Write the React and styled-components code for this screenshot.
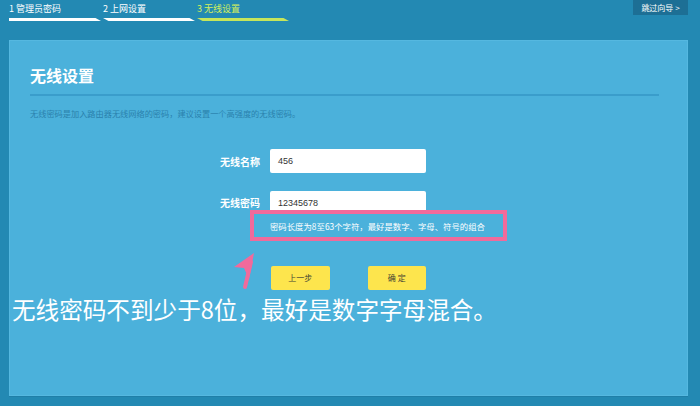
import React from "react";
import styled, { createGlobalStyle } from "styled-components";

const Global = createGlobalStyle`
  html, body {
    margin: 0;
    padding: 0;
    background: #2389b3;
    font-family: "Noto Sans CJK SC", "Noto Sans", sans-serif;
  }
`;

const Page = styled.div`
  width: 700px;
  height: 406px;
  background: #2389b3;
  overflow: hidden;
  position: relative;
`;

const Header = styled.div`
  height: 40px;
  display: flex;
  justify-content: space-between;
  padding: 0 12px 0 9px;
  box-sizing: border-box;
`;

const Steps = styled.div`
  display: flex;
  gap: 2px;
`;

const Step = styled.div`
  width: 92px;
  display: flex;
  flex-direction: column;
`;

const StepLabel = styled.span`
  font-size: 9px;
  line-height: 13px;
  padding-top: 2px;
  color: ${(p) => (p.active ? "#d2ef5c" : "#ffffff")};
`;

const StepBar = styled.div`
  margin-top: 3px;
  height: 3px;
  background: ${(p) => (p.active ? "#c6e55b" : "#ffffff")};
  clip-path: ${(p) =>
    p.first
      ? "polygon(0 0, 94% 0, 100% 100%, 0 100%)"
      : "polygon(0 0, 94% 0, 100% 100%, 6% 100%)"};
`;

const Skip = styled.div`
  width: 55px;
  height: 15px;
  background: #1d6f95;
  color: #ffffff;
  font-size: 8px;
  line-height: 15px;
  text-align: center;
`;

const Panel = styled.div`
  position: relative;
  margin: 0 12px 0 9px;
  height: 356px;
  background: #4bb1db;
  box-shadow: inset 0 0 0 1px #55b8e0, 0 1px 0 #1f7fa8;
  padding: 25px 29px 0 21px;
  box-sizing: border-box;
`;

const Title = styled.h2`
  margin: 0;
  font-size: 16px;
  line-height: 20px;
  font-weight: 700;
  color: #ffffff;
`;

const Rule = styled.div`
  margin-top: 9px;
  height: 2px;
  background: #3a9dcb;
`;

const Desc = styled.p`
  margin: 11px 0 0;
  font-size: 8.2px;
  line-height: 12px;
  color: #2a81ad;
`;

const Form = styled.div`
  margin-top: 30px;
  display: grid;
  grid-template-columns: 230px 156px;
  column-gap: 10px;
  align-items: center;
`;

const Label = styled.label`
  grid-column: 1;
  text-align: right;
  font-size: 10px;
  font-weight: 700;
  color: #ffffff;
  margin-top: ${(p) => p.top || 0}px;
`;

const Input = styled.div`
  grid-column: 2;
  height: ${(p) => p.h}px;
  margin-top: ${(p) => p.top || 0}px;
  background: #ffffff;
  border-radius: 2px;
  font-size: 9px;
  color: #333333;
  padding-left: 8px;
  display: flex;
  align-items: center;
  font-family: "Liberation Sans", "Noto Sans CJK SC", sans-serif;
`;

const Hint = styled.div`
  grid-column: 2;
  margin-top: 6px;
  font-size: 8.4px;
  line-height: 12px;
  color: #ffffff;
  white-space: nowrap;
`;

const Buttons = styled.div`
  grid-column: 2;
  margin-top: 34px;
  display: flex;
  gap: 38px;
  padding-left: 1px;
`;

const Button = styled.div`
  width: 59px;
  height: 24px;
  background: #fde54d;
  border-radius: 2px;
  font-size: 8px;
  line-height: 24px;
  color: #444433;
  text-align: center;
`;

const PinkBox = styled.div`
  position: absolute;
  left: 241px;
  top: 170px;
  width: 257px;
  height: 31px;
  border: 4px solid #f16a9b;
  box-sizing: border-box;
`;

const Arrow = styled.svg`
  position: absolute;
  left: 214px;
  top: 210px;
`;

const Note = styled.div`
  position: absolute;
  left: 3px;
  top: 254px;
  font-size: 23.6px;
  line-height: 30px;
  color: #ffffff;
  white-space: nowrap;
  font-family: "Noto Sans CJK SC", sans-serif;
`;

export default function App() {
  return (
    <Page>
      <Global />
      <Header>
        <Steps>
          <Step>
            <StepLabel>1 管理员密码</StepLabel>
            <StepBar first />
          </Step>
          <Step>
            <StepLabel>2 上网设置</StepLabel>
            <StepBar />
          </Step>
          <Step>
            <StepLabel active>3 无线设置</StepLabel>
            <StepBar active />
          </Step>
        </Steps>
        <Skip>跳过向导 &gt;</Skip>
      </Header>
      <Panel>
        <Title>无线设置</Title>
        <Rule />
        <Desc>无线密码是加入路由器无线网络的密码，建议设置一个高强度的无线密码。</Desc>
        <Form>
          <Label>无线名称</Label>
          <Input h={24}>456</Input>
          <Label top={18}>无线密码</Label>
          <Input h={23} top={18}>12345678</Input>
          <Hint>密码长度为8至63个字符，最好是数字、字母、符号的组合</Hint>
          <Buttons>
            <Button>上一步</Button>
            <Button>确 定</Button>
          </Buttons>
        </Form>
        <PinkBox />
        <Arrow width="40" height="40" viewBox="0 0 40 40">
          <path d="M22 37 L28 12" stroke="#f26a9c" strokeWidth="4" strokeLinecap="round" fill="none" />
          <path d="M31 3 L11 17 L21 18 L26 29 Z" fill="#f26a9c" />
        </Arrow>
        <Note>无线密码不到少于8位，最好是数字字母混合。</Note>
      </Panel>
    </Page>
  );
}
